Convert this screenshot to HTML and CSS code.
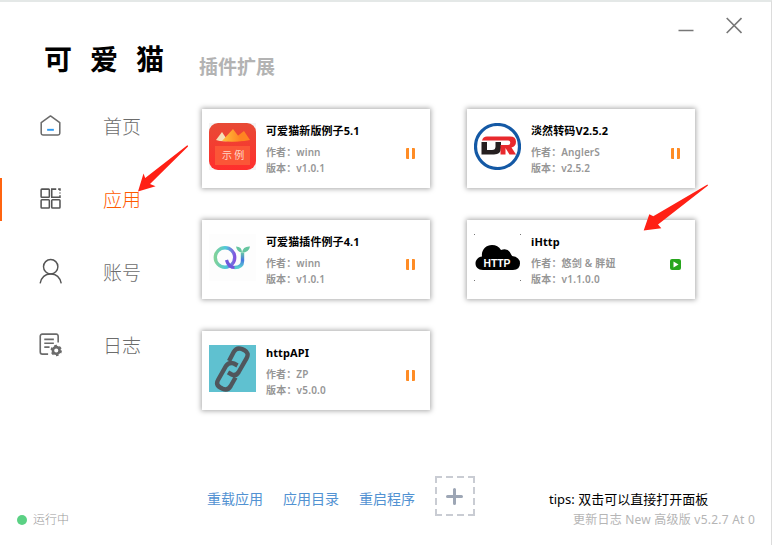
FILE: index.html
```html
<!DOCTYPE html>
<html lang="zh-CN">
<head>
<meta charset="utf-8">
<title>可爱猫</title>
<link rel="stylesheet" href="styles.css">
</head>
<body>
<div class="window">
  <aside class="sidebar">
    <div class="brand">可爱猫</div>
    <nav class="nav">
      <a class="nav-item">
        <svg class="nav-icon" viewBox="0 0 24 24" fill="none" stroke="#6b6b6b" stroke-width="1.6"><path d="M2.300 9 12 2l9.700 7v11q0 1.800-1.800 1.800H4.100q-1.800 0-1.800-1.800z" stroke-linejoin="round"/><path d="M8.500 16.500h7" stroke="#2b98f0" stroke-width="2"/></svg>
        <span>首页</span>
      </a>
      <a class="nav-item active">
        <svg class="nav-icon" viewBox="0 0 24 24" fill="none" stroke="#555" stroke-width="1.6"><rect x="2.200" y="2.200" width="8.600" height="8.600" rx=".8"/><path d="M18 2.200h-4.700v8.600h8.600V8.500M20 2.200h1.900V4M21.900 5.700v1"/><rect x="2.200" y="13.300" width="8.600" height="8.600" rx=".8"/><rect x="13.300" y="13.300" width="8.600" height="8.600" rx=".8"/></svg>
        <span>应用</span>
      </a>
      <a class="nav-item">
        <svg class="nav-icon" viewBox="0 0 24 24" fill="none" stroke="#555" stroke-width="1.5"><circle cx="12.200" cy="7" r="7.500"/><path d="M1.200 24.500C2.500 18 6.700 14.700 12.200 14.700S21.900 18 23.200 24.500"/></svg>
        <span>账号</span>
      </a>
      <a class="nav-item">
        <svg class="nav-icon" viewBox="0 0 24 24" fill="none" stroke="#6b6b6b" stroke-width="1.700"><path d="M20 10V3.500Q20 1.200 18 1.200H3.500Q1.300 1.200 1.300 3.500v16Q1.300 22 3.500 22h6M5.500 6.700h10M5.500 10.700h10M5.500 14.700h5.500"/><circle cx="18" cy="18.200" r="3.500" stroke-width="2.700"/><circle cx="18" cy="18.200" r="5" stroke-width="1.900" stroke-dasharray="2.700 2.536"/></svg>
        <span>日志</span>
      </a>
    </nav>
    <div class="status"><i class="dot"></i>运行中</div>
  </aside>
  <main class="main">
    <header class="header">
      <h1>插件扩展</h1>
      <div class="controls">
        <svg width="16" height="17" viewBox="0 0 16 17"><path d="M.500 13.500h15" stroke="#777" stroke-width="1.500"/></svg>
        <svg width="16" height="17" viewBox="0 0 16 17"><path d="m.700 1 14.800 15M15.500 1 .700 16" stroke="#777" stroke-width="1.600"/></svg>
      </div>
    </header>
    <section class="cards">
      <article class="card">
        <svg class="logo" viewBox="0 0 47 47"><defs><linearGradient id="red" x2="0" y2="1"><stop stop-color="#e84a35"/><stop offset="1" stop-color="#ff2e2d"/></linearGradient><linearGradient id="gold"><stop stop-color="#ffc13c"/><stop offset="1" stop-color="#ff7f20"/></linearGradient></defs><rect width="47" height="47" fill="#f4f4f4"/><rect width="47" height="47" rx="9" fill="url(#red)"/><path d="m7 17 6-8 6 9q-7 1-12-1" fill="#f5dfb8"/><path d="m22 18 13-10 6 9q-8 2-19 1" fill="#ff8422"/><path d="m13 18 11-12 9 12q-10 1.500-20 0" fill="url(#gold)"/><rect x="6" y="23" width="35" height="19" fill="#fb5637"/><text x="13" y="35.500" class="badge-text">示 例</text></svg>
        <div class="info"><h2>可爱猫新版例子5.1</h2><p>作者：winn</p><p>版本：v1.0.1</p></div>
        <span class="pause"></span>
      </article>
      <article class="card">
        <svg class="logo" viewBox="0 0 47 47"><circle cx="23.500" cy="23.500" r="22" fill="#fff" stroke="#1459a5" stroke-width="3.200"/><path d="M7.500 19h5.500v8h5q3.500 0 3.500-3.500V19H27v5.500q0 7-7 7H7.500z" fill="#251f20"/><path d="M8 17.500q1-4 5-4h23q6 0 6 5.200 0 4.800-4.500 5.800l4.500 7h-6.500l-4-6.500V31.500H26.500V22H34q2.300 0 2.300-2.200T34 17.500z" fill="#e8292d"/></svg>
        <div class="info"><h2>淡然转码V2.5.2</h2><p>作者：AnglerS</p><p>版本：v2.5.2</p></div>
        <span class="pause"></span>
      </article>
      <article class="card">
        <svg class="logo" viewBox="0 0 47 47" fill="none"><defs><linearGradient id="ring"><stop stop-color="#80d29a"/><stop offset=".55" stop-color="#4ec8da"/><stop offset="1" stop-color="#8155df"/></linearGradient><linearGradient id="hook" x2="0" y2="1"><stop stop-color="#68c9a5"/><stop offset=".5" stop-color="#4576df"/><stop offset="1" stop-color="#59d0cf"/></linearGradient></defs><rect width="47" height="47" fill="#fdfdfd"/><circle cx="16" cy="23.500" r="9.700" stroke="url(#ring)" stroke-width="3.400"/><path d="M17.500 26q2 7.500 8.500 7.500" stroke="#7058dc" stroke-width="3.200"/><path d="M33.500 18.500v8.500q0 6.500-8 6.500" stroke="url(#hook)" stroke-width="3.400"/><path d="M33 18.500q-5-.5-6-6 6 0 6 6m0 0q1-6.500 8-6-1 6-8 6" fill="#66c5a0"/></svg>
        <div class="info"><h2>可爱猫插件例子4.1</h2><p>作者：winn</p><p>版本：v1.0.1</p></div>
        <span class="pause"></span>
      </article>
      <article class="card">
        <svg class="logo" viewBox="0 0 47 47"><path d="M0 0h1v1H0zM46 0h1v1h-1zM0 46h1v1H0zM46 46h1v1h-1z" fill="#777"/><path d="M9 36C4 36 1.500 33 1.500 29.500S4 23 8 22.500C7 16 12 11 18 11q6 0 9 5 8-3 11 6 8 1 8 7.500 0 6-7 6.500z"/><text x="9.500" y="33" textLength="27" lengthAdjust="spacingAndGlyphs" class="http-text">HTTP</text></svg>
        <div class="info"><h2>iHttp</h2><p class="wide">作者：悠剑 &amp; 胖妞</p><p class="wide">版本：v1.1.0.0</p></div>
        <svg class="play" viewBox="0 0 11 11"><rect width="11" height="11" rx="2" fill="#27a51d"/><path d="m3.500 2.500 5 3-5 3z" fill="#fff"/></svg>
      </article>
      <article class="card">
        <svg class="logo" viewBox="0 0 47 47" fill="none" stroke="#50565c" stroke-width="4.400"><rect width="47" height="47" fill="#5fc1d0" stroke="none"/><path d="m20 16 4.700-9Q27.500 2 33 4l2.500 1.300q5 2.700 2 8L29.700 27q-2.700 4.500-7 2.500L19 27.300"/><path d="M28.500 20.500 25 18.500q-5-2-8 2.500L9.300 34.500q-3 5 2 8l2.400 1.200q5 2.300 8-2.700l4.800-8.500"/></svg>
        <div class="info"><h2>httpAPI</h2><p>作者：ZP</p><p class="wide">版本：v5.0.0</p></div>
        <span class="pause"></span>
      </article>
    </section>
    <footer class="footer">
      <div class="links"><a>重载应用</a><a>应用目录</a><a>重启程序</a></div>
      <svg class="add" viewBox="0 0 40 40" fill="none"><path d="M0 1h40M0 39h40" stroke="#c9ccd3" stroke-width="2" stroke-dasharray="7 4"/><path d="M1 0v40M39 0v40" stroke="#c9ccd3" stroke-width="2" stroke-dasharray="7 4"/><path d="M12.500 20.500h14M19.500 13.500v14" stroke="#9da6b5" stroke-width="3" stroke-linecap="round"/></svg>
      <div class="notes"><p class="tips">tips: 双击可以直接打开面板</p><p class="version">更新日志 New 高级版 v5.2.7 At 0</p></div>
    </footer>
  </main>
  <svg class="pointers" viewBox="0 0 772 545" fill="#ff2015"><path d="M187 145.500h1v1L150 184l5.600 2.300L138 191.500l5.500-18 1.700 4.500z"/><path d="m707.500 184.500.5 1-50 39 3.300 3.800-17.600 2.200 5.600-16.200 4 2z"/></svg>
</div>
</body>
</html>
```
FILE: styles.css
```css
* { box-sizing: border-box; margin: 0; padding: 0; }
body {
  font-family: "Noto Sans", "Noto Sans CJK SC", sans-serif;
  background: #fff;
  overflow: hidden;
}
.window {
  position: relative;
  display: flex;
  width: 772px;
  height: 545px;
  border-top: 2px solid #e4e8e7;
  border-right: 1px solid #dcdcdc;
}
.sidebar { display: flex; flex-direction: column; width: 199px; }
.brand {
  height: 86px;
  padding: 36px 0 0 44px;
  font: 700 28px/40px "Noto Sans CJK SC", sans-serif;
  letter-spacing: 18px;
  white-space: nowrap;
  color: #000;
}
.nav { display: flex; flex-direction: column; gap: 30px; padding-top: 17px; }
.nav-item {
  display: flex;
  align-items: center;
  gap: 41px;
  height: 43px;
  padding: 0 0 2px 39px;
  border-left: 0 solid #ff6410;
  font-size: 19px;
  font-weight: 300;
  color: #6c6c6c;
}
.nav-item.active { padding-left: 37px; border-left-width: 2px; color: #ff5a00; }
.nav-icon { width: 23px; height: 23px; overflow: visible; }
.status {
  display: flex;
  align-items: center;
  gap: 6px;
  margin: auto 0 16px 17px;
  font-size: 12px;
  line-height: 18px;
  font-weight: 300;
  color: #999;
}
.dot { width: 10px; height: 10px; border-radius: 50%; background: #5bd184; }
.main { display: flex; flex-direction: column; flex: 1; }
.header { display: flex; justify-content: space-between; height: 107px; }
.header h1 { padding-top: 51px; font-size: 19px; line-height: 28px; color: #b3b3b3; }
.controls { display: flex; gap: 32px; padding: 15px 29px 0 0; }
.cards {
  display: grid;
  grid-template-columns: 228px 228px;
  grid-auto-rows: 79px;
  gap: 32px 37px;
  padding-left: 3px;
}
.card {
  display: flex;
  padding: 14px 14px 0 7px;
  background: #fff;
  box-shadow: 0 0 5px 1px #aaa;
}
.logo { width: 47px; height: 47px; margin-right: 10px; }
.info { flex: 1; white-space: nowrap; }
.info h2 { margin-bottom: 5px; font-size: 11px; line-height: 16px; letter-spacing: .1px; color: #000; }
.info p { font-size: 10px; line-height: 16px; font-weight: 600; letter-spacing: .1px; color: #969696; }
.info .wide { letter-spacing: .2px; }
.badge-text { font: 10px "Noto Sans CJK SC", sans-serif; fill: #ffd8c8; }
.http-text { font: bold 10px "Liberation Sans", sans-serif; fill: #fff; }
.pause {
  width: 9px;
  height: 11px;
  margin: 25px 1px 0 0;
  border: solid #ff8c25;
  border-width: 0 3px;
  border-radius: 1px;
}
.play { width: 11px; height: 11px; margin-top: 25px; }
.footer { display: flex; margin-top: auto; height: 69px; }
.links {
  display: flex;
  gap: 20px;
  padding: 12px 0 0 8px;
  font-size: 14px;
  line-height: 22px;
  color: #5292d2;
}
.add { width: 40px; height: 40px; margin-left: 20px; }
.notes { flex: 1; padding: 13px 16px 0 0; white-space: nowrap; }
.tips { padding-left: 74px; font-size: 13px; line-height: 20px; color: #000; }
.version { padding-top: 1px; text-align: right; font-size: 12px; line-height: 20px; letter-spacing: .22px; color: #b5b5b5; }
.pointers { position: absolute; left: 0; top: -2px; width: 772px; height: 545px; }
```
